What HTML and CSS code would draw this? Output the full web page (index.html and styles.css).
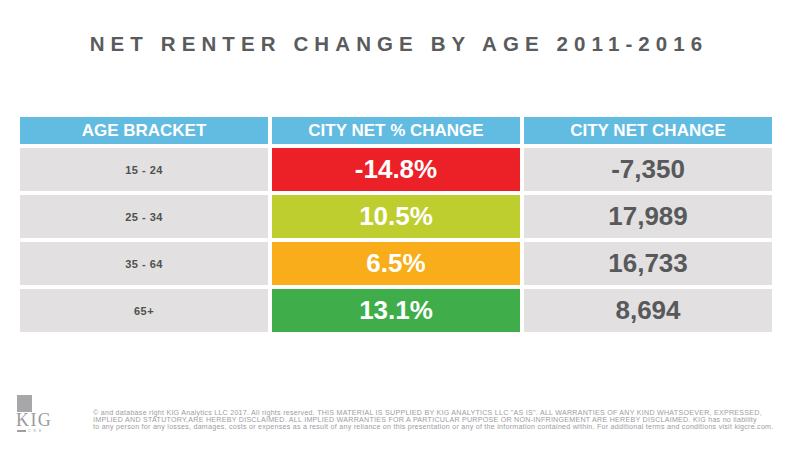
FILE: index.html
```html
<!DOCTYPE html>
<html>
<head>
<meta charset="utf-8">
<link rel="stylesheet" href="styles.css">
</head>
<body>
<div class="page">
  <h1 class="title">NET RENTER CHANGE BY AGE 2011-2016</h1>
  <div class="table">
    <div class="th">AGE BRACKET</div>
    <div class="th">CITY NET % CHANGE</div>
    <div class="th">CITY NET CHANGE</div>

    <div class="cell age">15 - 24</div>
    <div class="cell pct red">-14.8%</div>
    <div class="cell num">-7,350</div>

    <div class="cell age">25 - 34</div>
    <div class="cell pct lime">10.5%</div>
    <div class="cell num">17,989</div>

    <div class="cell age">35 - 64</div>
    <div class="cell pct orange">6.5%</div>
    <div class="cell num">16,733</div>

    <div class="cell age">65+</div>
    <div class="cell pct green">13.1%</div>
    <div class="cell num">8,694</div>
  </div>
  <div class="footer">
    <div class="logo">
      <div class="logo-square"></div>
      <div class="logo-text">KIG</div>
      <div class="logo-sub"><span class="logo-bar"></span><span class="logo-cre">CRE</span></div>
    </div>
    <div class="legal">
      <div class="line">© and database right KIG Analytics LLC 2017. All rights reserved. THIS MATERIAL IS SUPPLIED BY KIG ANALYTICS LLC "AS IS". ALL WARRANTIES OF ANY KIND WHATSOEVER, EXPRESSED,</div>
      <div class="line">IMPLIED AND STATUTORY,ARE HEREBY DISCLAIMED. ALL IMPLIED WARRANTIES FOR A PARTICULAR PURPOSE OR NON-INFRINGEMENT ARE HEREBY DISCLAIMED. KIG has no liability</div>
      <div class="line">to any person for any losses, damages, costs or expenses as a result of any reliance on this presentation or any of the information contained within. For additional terms and conditions visit kigcre.com.</div>
    </div>
  </div>
</div>
</body>
</html>
```

FILE: styles.css
```css
html, body {
  margin: 0;
  padding: 0;
  background: #ffffff;
}
body {
  font-family: "Liberation Sans", Arial, sans-serif;
  width: 792px;
  height: 468px;
  overflow: hidden;
}
.page {
  display: flex;
  flex-direction: column;
  padding-top: 32px;
}
.title {
  margin: 0;
  font-size: 20.5px;
  line-height: 24px;
  font-weight: 700;
  letter-spacing: 6.1px;
  color: #5a5b5d;
  text-align: center;
  padding-left: 6px;
}
.table {
  margin: 61px 0 0 20px;
  display: grid;
  grid-template-columns: repeat(3, 248px);
  grid-template-rows: 27px repeat(4, 43px);
  gap: 4px;
}
.th {
  background: #62bbe1;
  color: #ffffff;
  font-weight: 700;
  font-size: 17px;
  display: flex;
  align-items: center;
  justify-content: center;
}
.cell {
  display: flex;
  align-items: center;
  justify-content: center;
  font-weight: 700;
}
.age {
  background: #e2e0e1;
  color: #505050;
  font-size: 11px;
  letter-spacing: 0.5px;
}
.num {
  background: #e2e0e1;
  color: #58595b;
  font-size: 26px;
}
.pct {
  color: #ffffff;
  font-size: 26px;
}
.red { background: #ec2027; }
.lime { background: #bfce2f; }
.orange { background: #f9ad1b; }
.green { background: #3fad49; }

.footer {
  display: flex;
  align-items: flex-end;
  margin-top: 63px;
  padding-left: 17px;
}
.logo {
  display: flex;
  flex-direction: column;
  width: 36px;
}
.logo-square {
  width: 15px;
  height: 17px;
  background: #a7a7a9;
}
.logo-text {
  font-family: "Liberation Serif", "Times New Roman", serif;
  font-size: 18px;
  line-height: 13px;
  height: 13px;
  color: #9a9a9c;
  letter-spacing: 1.4px;
  margin-top: 2px;
  margin-left: -1px;
}
.logo-sub {
  display: flex;
  align-items: center;
  gap: 2px;
  height: 5px;
  margin-top: 1px;
}
.logo-bar {
  width: 9px;
  height: 2px;
  background: #a0a0a2;
}
.logo-cre {
  font-size: 3.5px;
  letter-spacing: 3px;
  color: #a0a0a2;
  line-height: 4px;
}
.legal {
  margin-left: 40px;
  margin-bottom: 2px;
  color: #9d9d9f;
  font-size: 7.1px;
  line-height: 7px;
  letter-spacing: 0.26px;
}
.line {
  white-space: nowrap;
}
```
